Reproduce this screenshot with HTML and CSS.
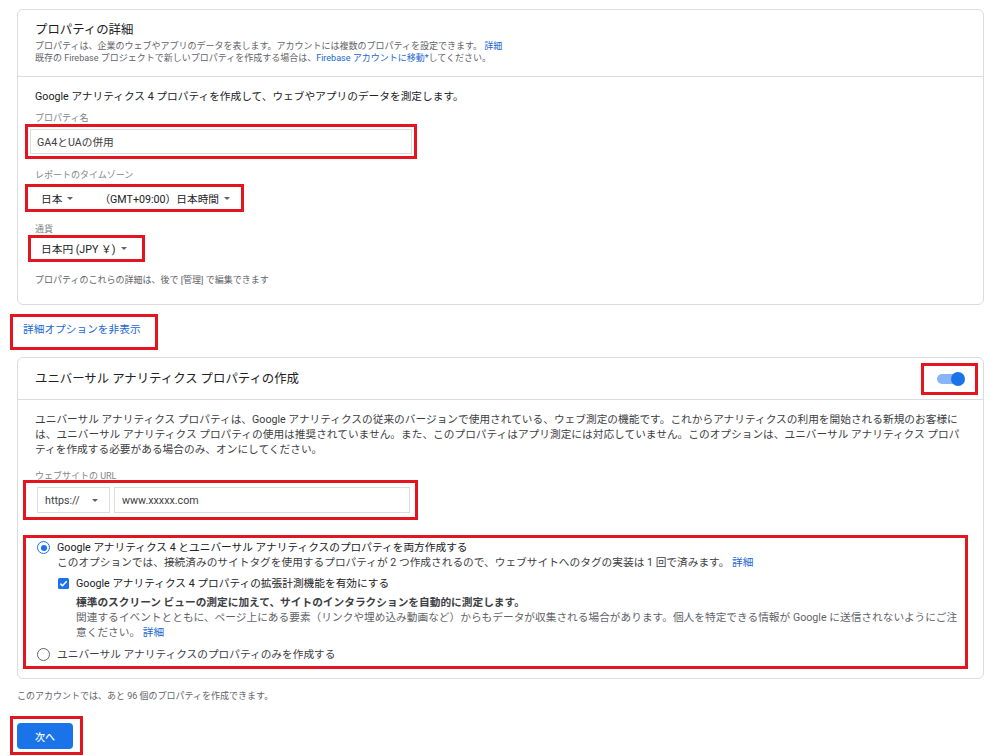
FILE: index.html
```html
<!DOCTYPE html>
<html lang="ja">
<head>
    <meta charset="utf-8">
    <title>プロパティの作成</title>
    <link rel="stylesheet" href="styles.css">
</head>
<body>
    <div class="container">
        <div class="card">
            <div class="card-head">
                <h2>プロパティの詳細</h2>
                <p class="sub">プロパティは、企業のウェブやアプリのデータを表します。アカウントには複数のプロパティを設定できます。 <a href="#">詳細</a></p>
                <p class="sub">既存の Firebase プロジェクトで新しいプロパティを作成する場合は、<a href="#">Firebase アカウントに移動*</a>してください。</p>
            </div>
            <div class="card-body">
                <p class="intro">Google アナリティクス 4 プロパティを作成して、ウェブやアプリのデータを測定します。</p>
                <div class="field-label label-name">プロパティ名</div>
                <div class="mark mark-name">
                    <input class="text-input" type="text" value="GA4とUAの併用">
                </div>

                <div class="field-label label-tz">レポートのタイムゾーン</div>
                <div class="mark mark-tz">
                    <span class="dd">日本<i class="caret"></i></span>
                    <span class="dd dd-zone">（GMT+09:00）日本時間<i class="caret"></i></span>
                </div>

                <div class="field-label label-cur">通貨</div>
                <div class="mark mark-cur">
                    <span class="dd">日本円 (JPY ￥)<i class="caret"></i></span>
                </div>

                <p class="note">プロパティのこれらの詳細は、後で [管理] で編集できます</p>
            </div>
        </div>

        <div class="mark mark-link">
            <a href="#" class="toggle-link">詳細オプションを非表示</a>
        </div>

        <div class="card card-ua">
            <div class="card-head head-row">
                <h2>ユニバーサル アナリティクス プロパティの作成</h2>
                <div class="mark mark-toggle">
                    <span class="switch"><span class="thumb"></span></span>
                </div>
            </div>
            <div class="card-body body-ua">
                <p class="desc">ユニバーサル アナリティクス プロパティは、Google アナリティクスの従来のバージョンで使用されている、ウェブ測定の機能です。これからアナリティクスの利用を開始される新規のお客様には、ユニバーサル アナリティクス プロパティの使用は推奨されていません。また、このプロパティはアプリ測定には対応していません。このオプションは、ユニバーサル アナリティクス プロパティを作成する必要がある場合のみ、オンにしてください。</p>

                <div class="field-label label-url">ウェブサイトの URL</div>
                <div class="mark mark-url">
                    <div class="proto">https://<i class="caret caret-lg"></i></div>
                    <input class="text-input url-input" type="text" value="www.xxxxx.com">
                </div>

                <div class="mark mark-opts">
                    <div class="opt">
                        <span class="radio on"></span>
                        <div class="opt-text">
                            <div class="opt-title">Google アナリティクス 4 とユニバーサル アナリティクスのプロパティを両方作成する</div>
                            <div class="opt-desc">このオプションでは、接続済みのサイトタグを使用するプロパティが 2 つ作成されるので、ウェブサイトへのタグの実装は 1 回で済みます。 <a href="#">詳細</a></div>
                            <div class="check-row">
                                <svg class="checkbox" width="11" height="11" viewBox="0 0 11 11">
                                    <rect width="11" height="11" rx="1.5" fill="#1a73e8"/>
                                    <path d="M2.4 5.6 L4.5 7.7 L8.7 3.3" fill="none" stroke="#fff" stroke-width="1.5"/>
                                </svg>
                                <div class="check-text">
                                    <div class="check-title">Google アナリティクス 4 プロパティの拡張計測機能を有効にする</div>
                                    <div class="check-strong">標準のスクリーン ビューの測定に加えて、サイトのインタラクションを自動的に測定します。</div>
                                    <div class="check-desc">関連するイベントとともに、ページ上にある要素（リンクや埋め込み動画など）からもデータが収集される場合があります。個人を特定できる情報が Google に送信されないようにご注意ください。 <a href="#">詳細</a></div>
                                </div>
                            </div>
                        </div>
                    </div>
                    <div class="opt opt-second">
                        <span class="radio"></span>
                        <div class="opt-text opt-title dim">ユニバーサル アナリティクスのプロパティのみを作成する</div>
                    </div>
                </div>
            </div>
        </div>

        <p class="remain">このアカウントでは、あと 96 個のプロパティを作成できます。</p>

        <div class="mark mark-btn">
            <button class="next-btn">次へ</button>
        </div>
    </div>
</body>
</html>
```

FILE: styles.css
```css
html, body { margin: 0; overflow: hidden; }
body {
    font-family: Roboto, "Noto Sans CJK JP", sans-serif;
    font-size: 10.7px;
    color: #202124;
    background: #fff;
}
p { margin: 0; }
a { color: #1967d2; text-decoration: none; }
.container { width: 967px; padding: 9px 0 0 17px; }

/* red annotation frames */
.mark { border: 3px solid #e3161f; box-sizing: border-box; }

.card {
    border: 1px solid #dadce0;
    border-radius: 6px;
}
.card-head {
    padding: 11px 17px 12px;
    border-bottom: 1px solid #dadce0;
}
.card-head h2 {
    margin: 0 0 1px;
    font-size: 12.4px;
    font-weight: 400;
    line-height: 18px;
    color: #202124;
}
.sub {
    font-size: 9px;
    line-height: 12px;
    color: #5f6368;
}
.card-body { padding: 12px 17px 18px; }
.intro { line-height: 16px; color: #202124; }

.field-label {
    font-size: 9px;
    line-height: 12px;
    color: #80868b;
}
.label-name { margin-top: 7px; }
.label-tz { margin-top: 10px; margin-bottom: 3px; }
.label-cur { margin-top: 11px; }

.text-input {
    width: 100%;
    height: 100%;
    box-sizing: border-box;
    border: 1px solid #dadce0;
    padding: 0 6px;
    font: inherit;
    color: #3c4043;
    outline: none;
}
.mark-name { width: 392px; height: 35px; margin-left: -10px; padding: 2px; }

.mark-tz {
    width: 219px;
    height: 28px;
    margin-left: -10px;
    padding-left: 13px;
    display: flex;
    align-items: center;
}
.dd { display: flex; align-items: center; color: #202124; }
.dd-zone { margin-left: 26px; }
.caret {
    width: 0;
    height: 0;
    margin-left: 5px;
    border-left: 3px solid transparent;
    border-right: 3px solid transparent;
    border-top: 3px solid #5f6368;
}
.caret-lg { border-left-width: 3.5px; border-right-width: 3.5px; border-top-width: 3.5px; }

.mark-cur {
    width: 117px;
    height: 27px;
    margin-left: -7px;
    padding-left: 10px;
    display: flex;
    align-items: center;
}
.note {
    margin-top: 12px;
    font-size: 9px;
    line-height: 12px;
    color: #5f6368;
}

.mark-link {
    width: 148px;
    height: 36px;
    margin: 9px 0 0 -7px;
    padding: 5px 0 0 10px;
}
.toggle-link { line-height: 16px; }

.card-ua { margin-top: 7px; }
.head-row {
    height: 42px;
    box-sizing: border-box;
    padding: 0 5px 0 17px;
    display: flex;
    align-items: center;
    justify-content: space-between;
}
.head-row h2 { margin: 0; }
.mark-toggle {
    width: 57px;
    height: 32px;
    display: flex;
    align-items: center;
    justify-content: center;
}
.switch {
    width: 26px;
    height: 10px;
    border-radius: 5px;
    background: #8ab4f8;
    display: flex;
    align-items: center;
    justify-content: flex-end;
}
.thumb {
    flex: none;
    width: 14px;
    height: 14px;
    margin-right: -2px;
    border-radius: 50%;
    background: #1a73e8;
}

.body-ua { padding: 12px 17px 9px; }
.desc { margin-right: 6px; line-height: 15px; color: #3c4043; }
.label-url { margin-top: 14px; line-height: 10px; }

.mark-url {
    width: 395px;
    height: 40px;
    margin: -1px 0 0 -12px;
    padding: 4px 5px 4px 11px;
    display: flex;
}
.proto {
    width: 73px;
    box-sizing: border-box;
    border: 1px solid #dadce0;
    padding: 0 11px 0 7px;
    display: flex;
    align-items: center;
    justify-content: space-between;
    color: #3c4043;
}
.url-input { width: 296px; margin-left: 4px; padding: 0 7px; }

.mark-opts {
    margin: 15px -2px 0 -12px;
    padding: 2px 4px 4px 11px;
    line-height: 15px;
}
.opt { display: flex; align-items: flex-start; }
.opt-second { margin-top: 7px; }
.radio {
    flex: none;
    width: 13px;
    height: 13px;
    margin: 1px 7px 0 0;
    box-sizing: border-box;
    border: 1.5px solid #5f6368;
    border-radius: 50%;
    display: flex;
    align-items: center;
    justify-content: center;
}
.radio.on { border-color: #1a73e8; }
.radio.on::after {
    content: "";
    width: 6px;
    height: 6px;
    border-radius: 50%;
    background: #1a73e8;
}
.opt-text { flex: 1; }
.opt-title { color: #202124; }
.opt-title.dim { color: #3c4043; }
.opt-desc { color: #3c4043; }
.check-row { display: flex; align-items: flex-start; margin-top: 6px; }
.checkbox { flex: none; margin: 2px 7px 0 1px; }
.check-text { flex: 1; }
.check-title { color: #202124; }
.check-strong { margin-top: 4px; font-weight: 700; color: #3c4043; }
.check-desc { color: #5f6368; }

.remain {
    margin-top: 11px;
    font-size: 9px;
    line-height: 12px;
    color: #5f6368;
}
.mark-btn {
    width: 73px;
    height: 39px;
    margin: 14px 0 0 -7px;
    padding: 4px;
}
.next-btn {
    width: 56px;
    height: 26px;
    border: none;
    border-radius: 4px;
    background: #1a73e8;
    color: #fff;
    font-family: inherit;
    font-size: 10px;
    font-weight: 500;
    cursor: pointer;
}
```
